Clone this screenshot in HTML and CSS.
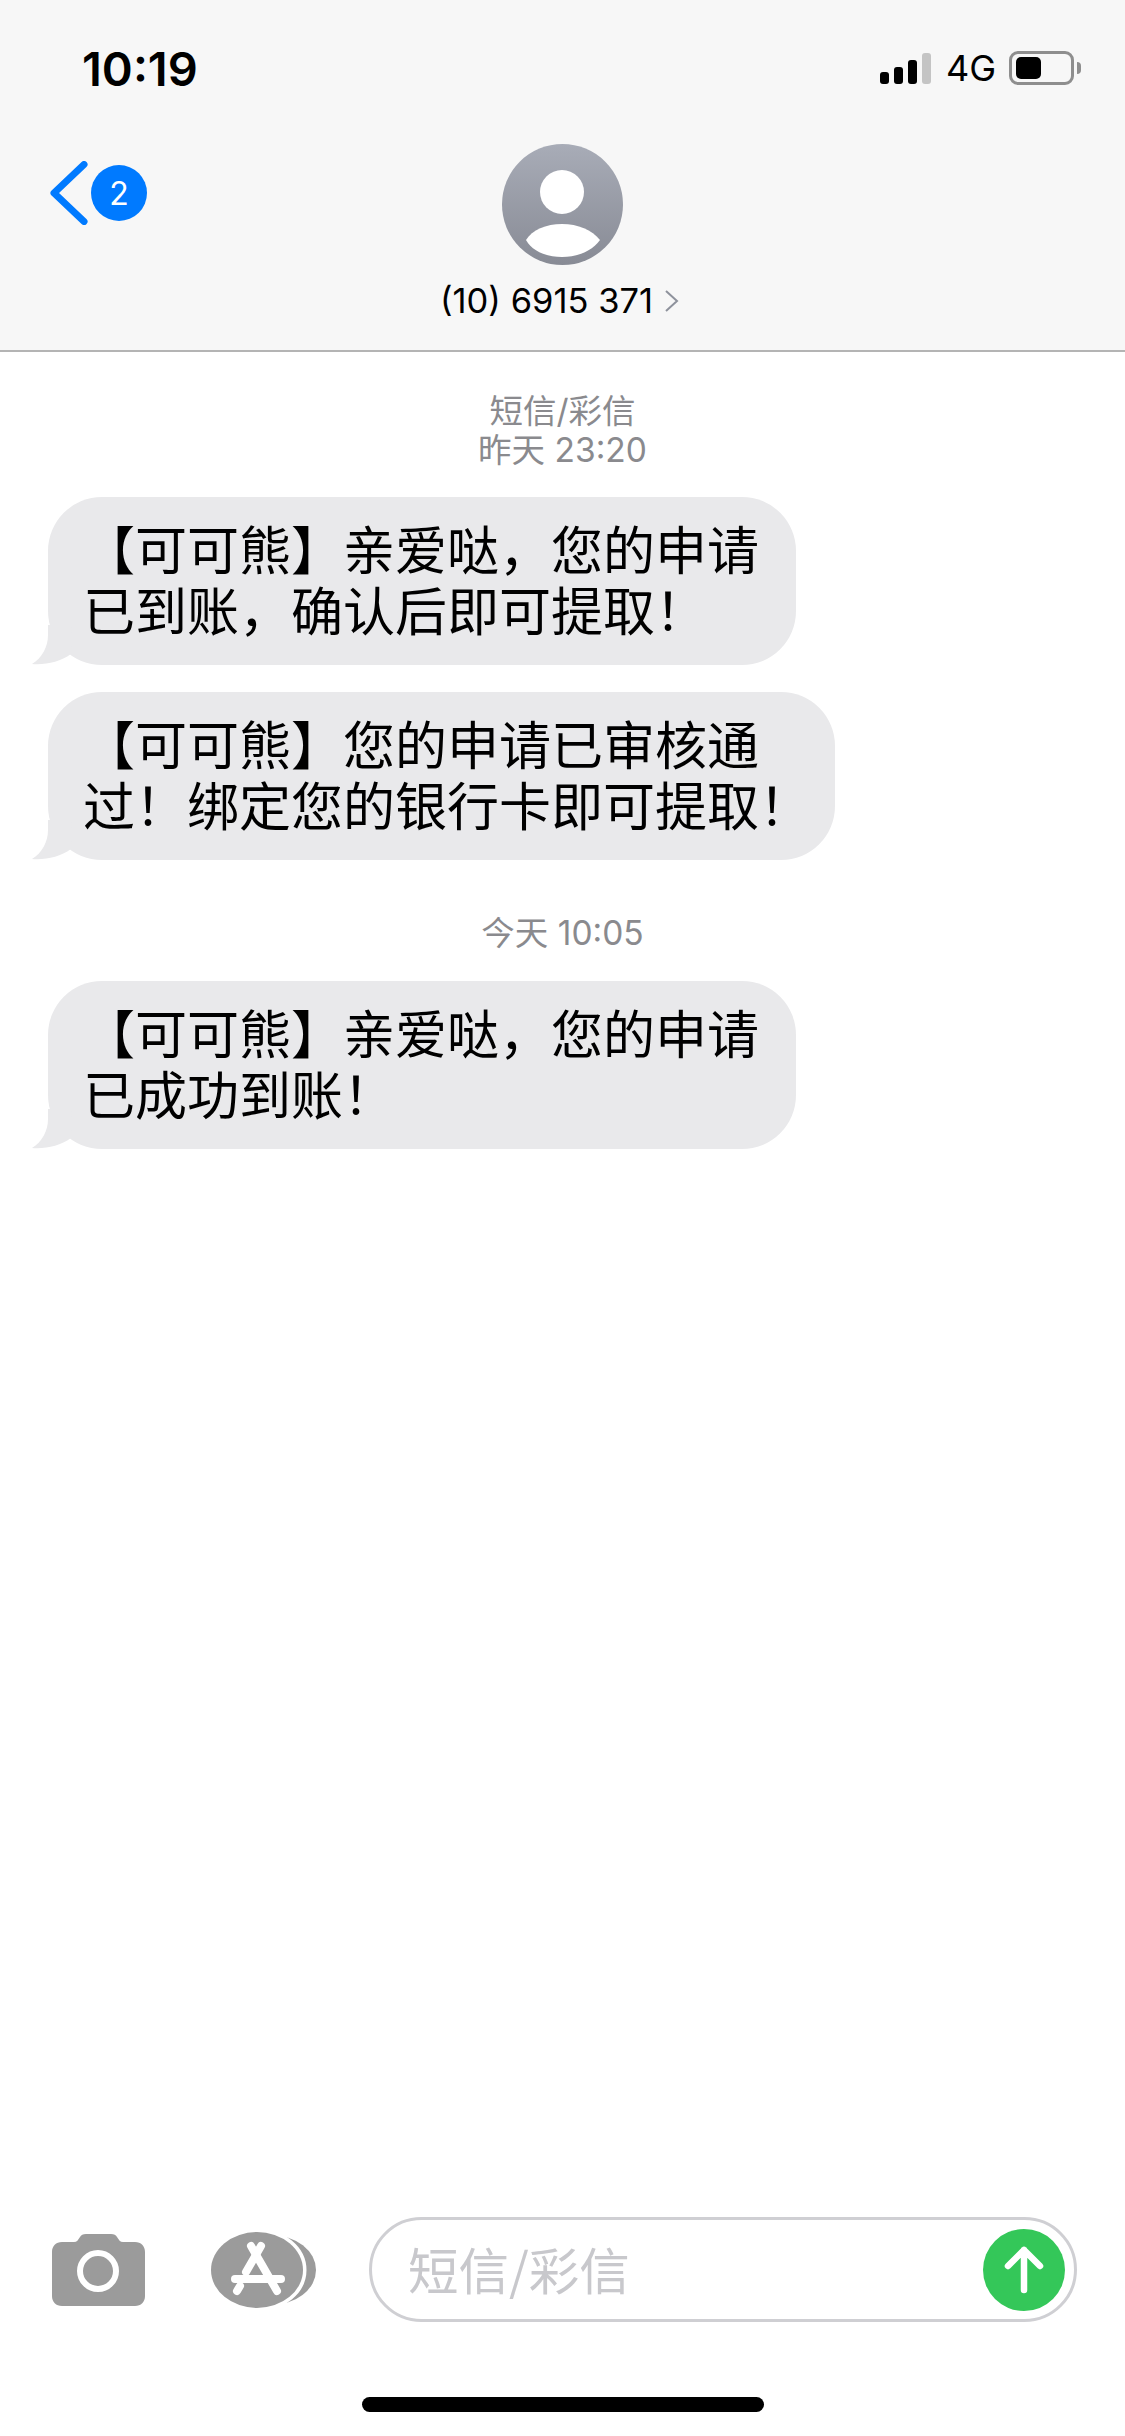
FILE: index.html
```html
<!DOCTYPE html>
<html lang="zh-CN">
<head>
    <meta charset="UTF-8">
    <meta name="viewport" content="width=device-width, initial-scale=1.0">
    <title>短信/彩信</title>
    <link rel="stylesheet" href="styles.css">
</head>
<body>
    <header class="top-bar">
        <div class="status-bar">
            <span class="clock">10:19</span>
            <div class="status-icons">
                <div class="signal">
                    <span class="bar bar-1"></span>
                    <span class="bar bar-2"></span>
                    <span class="bar bar-3"></span>
                    <span class="bar bar-4"></span>
                </div>
                <span class="network">4G</span>
                <div class="battery">
                    <div class="battery-body"><span class="battery-level"></span></div>
                    <span class="battery-nub"></span>
                </div>
            </div>
        </div>
        <nav class="nav-row">
            <div class="back">
                <svg class="back-icon" width="38" height="64" viewBox="0 0 38 64">
                    <path d="M34 3.500L4 32L34 60.500" fill="none" stroke="#007aff" stroke-width="7" stroke-linecap="round" stroke-linejoin="round"/>
                </svg>
                <span class="badge">2</span>
            </div>
            <div class="contact">
                <svg class="avatar" width="121" height="121" viewBox="0 0 121 121">
                    <defs>
                        <linearGradient id="avatarFill" x1="0" y1="0" x2="0" y2="1">
                            <stop offset="0" stop-color="#a8acb7"/>
                            <stop offset="1" stop-color="#888b95"/>
                        </linearGradient>
                    </defs>
                    <circle cx="60.500" cy="60.500" r="60.500" fill="url(#avatarFill)"/>
                    <circle cx="60" cy="48" r="22" fill="#fff"/>
                    <path d="M24 96C30 86 44 80 60 80C76 80 90 86 98 96C90 107 76 113 60 113C44 113 30 107 24 96Z" fill="#fff"/>
                </svg>
                <div class="contact-name">
                    <span>(10) 6915 371</span>
                    <svg class="contact-arrow" width="15" height="22" viewBox="0 0 15 22">
                        <path d="M2 1L13 11L2 21" fill="none" stroke="#8e929c" stroke-width="2"/>
                    </svg>
                </div>
            </div>
        </nav>
    </header>

    <main class="thread">
        <div class="time-label time-label-first">
            <div>短信/彩信</div>
            <div>昨天 23:20</div>
        </div>

        <div class="bubble">
            <svg class="bubble-tail" width="40" height="40" viewBox="0 0 40 40">
                <path d="M16 0V10C16 22 10 33 0 39C14 40 28 37 39 29L40 0Z" fill="#e9e9eb"/>
            </svg>
            <p class="bubble-text">【可可熊】亲爱哒，您的申请<br>已到账，确认后即可提取！</p>
        </div>
        <div class="bubble bubble-wide">
            <svg class="bubble-tail" width="40" height="40" viewBox="0 0 40 40">
                <path d="M16 0V10C16 22 10 33 0 39C14 40 28 37 39 29L40 0Z" fill="#e9e9eb"/>
            </svg>
            <p class="bubble-text">【可可熊】您的申请已审核通<br>过！绑定您的银行卡即可提取！</p>
        </div>

        <div class="time-label time-label-today">今天 10:05</div>

        <div class="bubble">
            <svg class="bubble-tail" width="40" height="40" viewBox="0 0 40 40">
                <path d="M16 0V10C16 22 10 33 0 39C14 40 28 37 39 29L40 0Z" fill="#e9e9eb"/>
            </svg>
            <p class="bubble-text">【可可熊】亲爱哒，您的申请<br>已成功到账！</p>
        </div>
    </main>

    <footer class="composer">
        <div class="composer-row">
            <svg class="camera-icon" width="93" height="72" viewBox="0 0 93 72">
                <path d="M10 8H22C25 8 26 6 28 3C29 1 31 0 34 0H59C62 0 64 1 65 3C67 6 68 8 71 8H83C89 8 93 12 93 18V62C93 68 89 72 83 72H10C4 72 0 68 0 62V18C0 12 4 8 10 8Z" fill="#9b9b9b"/>
                <circle cx="46" cy="37" r="18" fill="none" stroke="#fff" stroke-width="6"/>
            </svg>
            <svg class="apps-icon" width="106" height="76" viewBox="0 0 106 76">
                <ellipse cx="60" cy="38" rx="45" ry="35" fill="#9b9b9b"/>
                <ellipse cx="46" cy="38" rx="46" ry="38" fill="#9b9b9b" stroke="#fff" stroke-width="7" paint-order="stroke"/>
                <g fill="none" stroke="#fff" stroke-width="8" stroke-linecap="round">
                    <path d="M40 14L66 59"/>
                    <path d="M50 14L35 40"/>
                    <path d="M24 47H70"/>
                    <path d="M29 54L26 59"/>
                </g>
            </svg>
            <div class="message-input">
                <span class="placeholder">短信/彩信</span>
                <svg class="send-button" width="82" height="82" viewBox="0 0 82 82">
                    <circle cx="41" cy="41" r="41" fill="#34c759"/>
                    <path d="M41 61V21M25 37L41 21L57 37" fill="none" stroke="#fff" stroke-width="6.500" stroke-linecap="round" stroke-linejoin="round"/>
                </svg>
            </div>
        </div>
        <div class="home-indicator"></div>
    </footer>
</body>
</html>
```

FILE: styles.css
```css
body {
    font-family: Inter, "Noto Sans CJK SC", sans-serif;
    background-color: #fff;
    color: #000;
    margin: 0;
    padding: 0;
    width: 1125px;
    height: 2436px;
    overflow: hidden;
    display: flex;
    flex-direction: column;
}

/* top bar */
.top-bar {
    height: 350px;
    background-color: #f7f7f7;
    border-bottom: 2px solid #b4b4b4;
}
.status-bar {
    height: 50px;
    padding: 43px 44px 1px 82px;
    display: flex;
    justify-content: space-between;
    align-items: center;
}
.clock {
    font-size: 47px;
    font-weight: 600;
}
.status-icons {
    display: flex;
    align-items: center;
}
.signal {
    display: flex;
    align-items: flex-end;
    gap: 5px;
    height: 31px;
    margin-top: 1px;
}
.bar {
    width: 9px;
    background-color: #000;
    border-radius: 3px;
}
.bar-1 { height: 12px; }
.bar-2 { height: 17px; }
.bar-3 { height: 24px; }
.bar-4 { height: 31px; background-color: #c4c4c4; }
.network {
    font-size: 36px;
    margin: 0 13px 0 15px;
}
.battery {
    display: flex;
    align-items: center;
    gap: 3px;
}
.battery-body {
    width: 53px;
    height: 22px;
    padding: 3px;
    border: 3px solid #8e8e8e;
    border-radius: 9px;
    display: flex;
    align-items: center;
}
.battery-level {
    width: 25px;
    height: 22px;
    margin-left: 1px;
    background-color: #000;
    border-radius: 5px;
}
.battery-nub {
    width: 4px;
    height: 12px;
    background-color: #8e8e8e;
    border-radius: 0 4px 4px 0;
}

.nav-row {
    position: relative;
    padding-top: 50px;
    display: flex;
    justify-content: center;
}
.back {
    position: absolute;
    left: 50px;
    top: 67px;
    display: flex;
    align-items: center;
    gap: 3px;
}
.back-icon {
    display: block;
}
.badge {
    width: 56px;
    height: 56px;
    border-radius: 50%;
    background-color: #007aff;
    color: #fff;
    font-size: 32px;
    display: flex;
    align-items: center;
    justify-content: center;
}
.contact {
    display: flex;
    flex-direction: column;
    align-items: center;
}
.avatar {
    display: block;
}
.contact-name {
    margin: 17px 6px 0 0;
    display: flex;
    align-items: center;
    gap: 11px;
    font-size: 34.500px;
    line-height: 38px;
}

/* messages */
.thread {
    flex: 1;
    display: flex;
    flex-direction: column;
    align-items: flex-start;
}
.time-label {
    align-self: center;
    text-align: center;
    color: #8a8a8e;
    font-size: 33.500px;
    line-height: 39px;
}
.time-label-first {
    margin: 40px 0 27px 0;
}
.time-label-today {
    margin: 27px 0 28px 0;
}
.bubble {
    position: relative;
    margin: 0 0 27px 48px;
    padding: 21px 37px 26px 35px;
    background-color: #e9e9eb;
    border-radius: 54px;
}
.bubble-wide {
    padding-right: 24px;
}
.bubble-text {
    margin: 0;
    font-family: "Noto Sans CJK SC", sans-serif;
    font-size: 52px;
    line-height: 60.500px;
    white-space: nowrap;
}
.bubble-tail {
    position: absolute;
    left: -16px;
    bottom: 0;
}

/* composer */
.composer {
    padding-bottom: 24px;
}
.composer-row {
    display: flex;
    align-items: center;
    padding: 0 48px 0 52px;
}
.camera-icon {
    display: block;
    margin-right: 66px;
}
.apps-icon {
    display: block;
    margin-right: 52px;
}
.message-input {
    flex: 1;
    height: 99px;
    border: 3px solid #cfcfd3;
    border-radius: 53px;
    padding: 0 9px 0 36px;
    display: flex;
    align-items: center;
    justify-content: space-between;
}
.placeholder {
    font-family: "Noto Sans CJK SC", sans-serif;
    font-size: 50.500px;
    color: #c8c8cc;
    padding-bottom: 4px;
}
.send-button {
    display: block;
}
.home-indicator {
    width: 402px;
    height: 15px;
    margin: 75px 0 0 362px;
    background-color: #000;
    border-radius: 8px;
}
```
